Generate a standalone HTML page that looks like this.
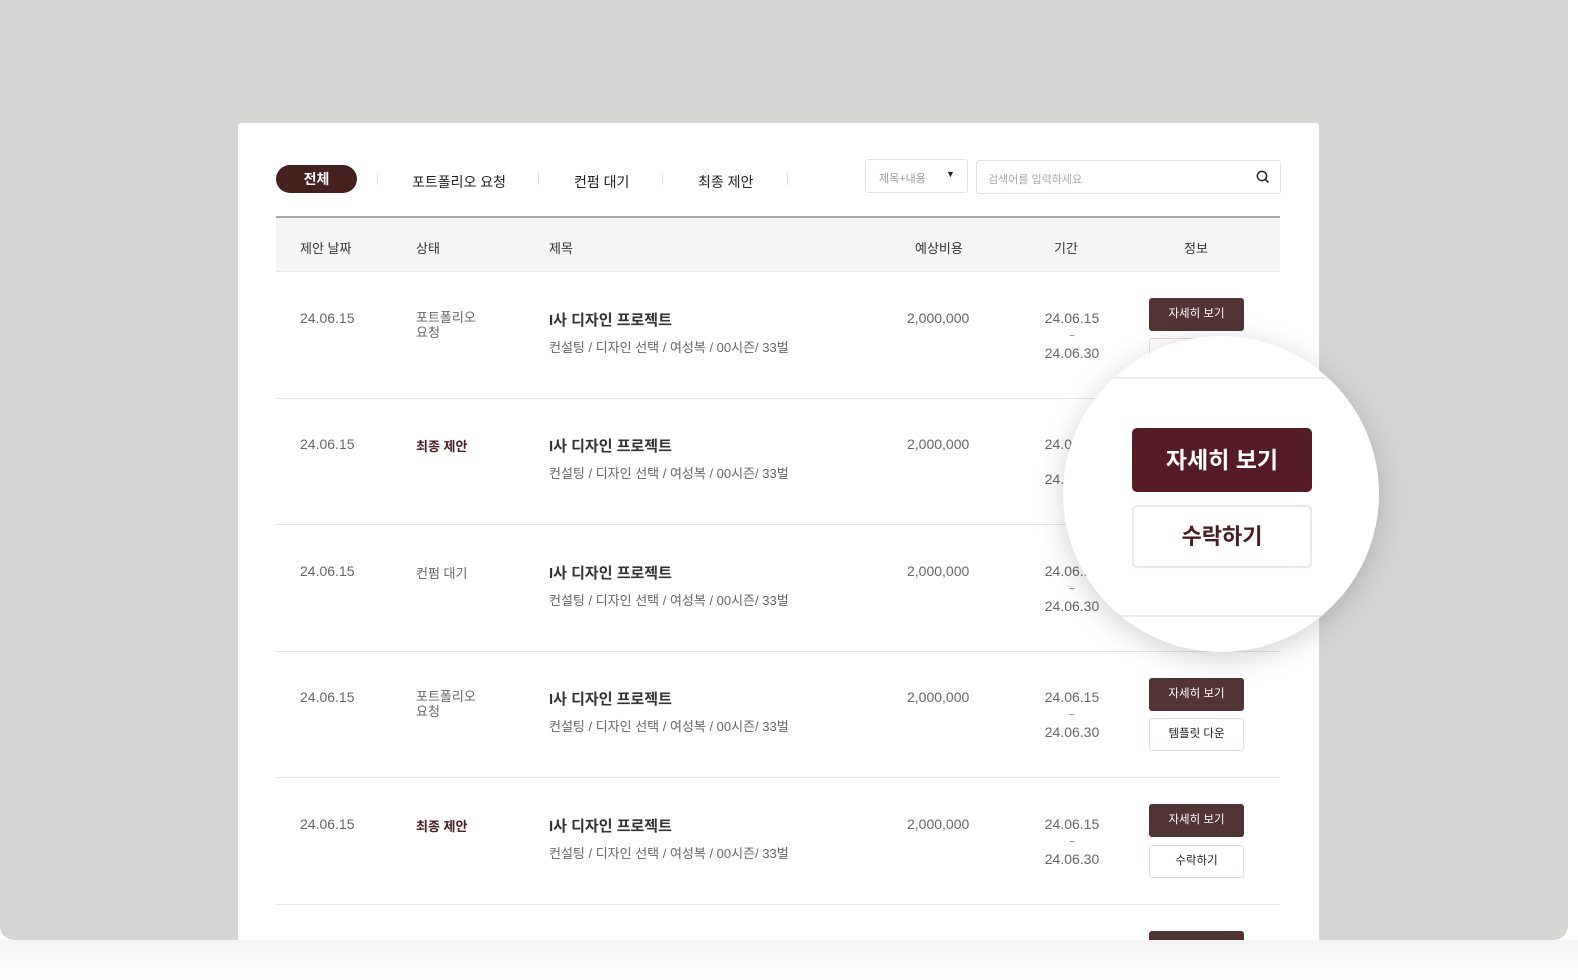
<!DOCTYPE html>
<html><head><meta charset="utf-8"><style>
*{margin:0;padding:0;box-sizing:border-box}
body{width:1578px;height:980px;background:#fff;position:relative;overflow:hidden;font-family:"Liberation Sans","Noto Sans CJK KR",sans-serif;color:#333}
.bg{position:absolute;left:0;top:0;width:1568px;height:940px;background:#d5d5d3;border-radius:0 0 14px 14px;overflow:hidden}
.card{position:absolute;left:238px;top:123px;width:1081px;height:817px;background:#fff;border-radius:3px 3px 0 0}
.a{position:absolute;white-space:nowrap}
.tab{font-size:14px;color:#222;top:172px}
.sep{position:absolute;top:173px;width:1px;height:12px;background:#ddd}
.row .a{font-size:14px}
.g{color:#666}
.btn{position:absolute;left:1149px;width:95px;height:33px;border-radius:3px;font-size:11.5px;text-align:center;line-height:33px}
.d{background:#533435;color:#fff}
.o{background:#fff;border:1px solid #e6d9d7;color:#222;line-height:31px}
.hl{position:absolute;left:276px;width:1004px;height:1px;background:#e4e4e4}
</style></head><body>
<div class="bg">
<div class="card"></div>
</div>
<!-- tabs -->
<div class="a" style="left:276px;top:165px;width:81px;height:28px;border-radius:14px;background:#45201f;color:#fff;font-size:14px;font-weight:bold;text-align:center;line-height:28px">전체</div>
<div class="sep" style="left:377px"></div>
<div class="a tab" style="left:412px">포트폴리오 요청</div>
<div class="sep" style="left:538px"></div>
<div class="a tab" style="left:574px">컨펌 대기</div>
<div class="sep" style="left:662px"></div>
<div class="a tab" style="left:698px">최종 제안</div>
<div class="sep" style="left:787px"></div>
<div class="a" style="left:865px;top:159px;width:103px;height:34px;border:1px solid #e2e2e2;border-radius:3px;font-size:11px;color:#999;padding:10px 0 0 13px">제목+내용<span style="position:absolute;left:80px;top:9px;color:#222;font-size:9px">▼</span></div>
<div class="a" style="left:976px;top:160px;width:305px;height:34px;border:1px solid #e2e2e2;border-radius:3px;font-size:11px;color:#aaa;padding:10px 0 0 11px">검색어를 입력하세요
<svg style="position:absolute;right:10px;top:9px" width="14" height="14" viewBox="0 0 14 14"><circle cx="6" cy="6" r="4.6" fill="none" stroke="#222" stroke-width="1.5"/><path d="M9.4 9.4L12.5 12.5" stroke="#222" stroke-width="1.6"/></svg></div>
<!-- header -->
<div class="a" style="left:276px;top:216px;width:1004px;height:56px;background:#f5f5f5;border-top:2px solid #a8a8a8;border-bottom:1px solid #e6e6e6"></div>
<div class="a" style="left:300px;top:238px;font-size:13px">제안 날짜</div>
<div class="a" style="left:416px;top:238px;font-size:13px">상태</div>
<div class="a" style="left:549px;top:238px;font-size:13px">제목</div>
<div class="a" style="left:915px;top:238px;font-size:13px">예상비용</div>
<div class="a" style="left:1054px;top:238px;font-size:13px">기간</div>
<div class="a" style="left:1184px;top:238px;font-size:13px">정보</div>
<div class="hl" style="top:398px"></div><div class="hl" style="top:524px"></div><div class="hl" style="top:651px"></div><div class="hl" style="top:777px"></div><div class="hl" style="top:904px"></div>

<div class="row">
<!-- row1 y=272 -->
<div class="a g" style="left:300px;top:310px">24.06.15</div>
<div class="a g" style="left:416px;top:310px;font-size:13px;line-height:15px">포트폴리오<br>요청</div>
<div class="a" style="left:549px;top:309px;font-size:15px;font-weight:bold;color:#333">I사 디자인 프로젝트</div>
<div class="a g" style="left:549px;top:337px;font-size:13px">컨설팅 / 디자인 선택 / 여성복 / 00시즌/ 33벌</div>
<div class="a g" style="left:907px;top:310px">2,000,000</div>
<div class="a g" style="left:1043px;top:310px;text-align:center;width:58px;line-height:16px">24.06.15<br><span style="font-size:10px">~</span><br>24.06.30</div>
<div class="btn d" style="top:298px">자세히 보기</div>
<div class="btn o" style="top:338px"></div>
<!-- row2 y=398 -->
<div class="a g" style="left:300px;top:436px">24.06.15</div>
<div class="a" style="left:416px;top:436px;font-size:13px;font-weight:bold;color:#4a1e20">최종 제안</div>
<div class="a" style="left:549px;top:435px;font-size:15px;font-weight:bold">I사 디자인 프로젝트</div>
<div class="a g" style="left:549px;top:463px;font-size:13px">컨설팅 / 디자인 선택 / 여성복 / 00시즌/ 33벌</div>
<div class="a g" style="left:907px;top:436px">2,000,000</div>
<div class="a g" style="left:1043px;top:436px;text-align:center;width:58px;line-height:16px">24.06.15<br><span style="font-size:10px">~</span><br>24.06.30</div>
<!-- row3 y=524 -->
<div class="a g" style="left:300px;top:563px">24.06.15</div>
<div class="a g" style="left:416px;top:563px;font-size:13px">컨펌 대기</div>
<div class="a" style="left:549px;top:562px;font-size:15px;font-weight:bold">I사 디자인 프로젝트</div>
<div class="a g" style="left:549px;top:590px;font-size:13px">컨설팅 / 디자인 선택 / 여성복 / 00시즌/ 33벌</div>
<div class="a g" style="left:907px;top:563px">2,000,000</div>
<div class="a g" style="left:1043px;top:563px;text-align:center;width:58px;line-height:16px">24.06.15<br><span style="font-size:10px">~</span><br>24.06.30</div>
<!-- row4 y=651 -->
<div class="a g" style="left:300px;top:689px">24.06.15</div>
<div class="a g" style="left:416px;top:689px;font-size:13px;line-height:15px">포트폴리오<br>요청</div>
<div class="a" style="left:549px;top:688px;font-size:15px;font-weight:bold">I사 디자인 프로젝트</div>
<div class="a g" style="left:549px;top:716px;font-size:13px">컨설팅 / 디자인 선택 / 여성복 / 00시즌/ 33벌</div>
<div class="a g" style="left:907px;top:689px">2,000,000</div>
<div class="a g" style="left:1043px;top:689px;text-align:center;width:58px;line-height:16px">24.06.15<br><span style="font-size:10px">~</span><br>24.06.30</div>
<div class="btn d" style="top:678px">자세히 보기</div>
<div class="btn o" style="top:718px">템플릿 다운</div>
<!-- row5 y=777 -->
<div class="a g" style="left:300px;top:816px">24.06.15</div>
<div class="a" style="left:416px;top:816px;font-size:13px;font-weight:bold;color:#4a1e20">최종 제안</div>
<div class="a" style="left:549px;top:815px;font-size:15px;font-weight:bold">I사 디자인 프로젝트</div>
<div class="a g" style="left:549px;top:843px;font-size:13px">컨설팅 / 디자인 선택 / 여성복 / 00시즌/ 33벌</div>
<div class="a g" style="left:907px;top:816px">2,000,000</div>
<div class="a g" style="left:1043px;top:816px;text-align:center;width:58px;line-height:16px">24.06.15<br><span style="font-size:10px">~</span><br>24.06.30</div>
<div class="btn d" style="top:804px">자세히 보기</div>
<div class="btn o" style="top:845px">수락하기</div>
<div class="a" style="left:1149px;top:931px;width:95px;height:9px;background:#533435;border-radius:3px 3px 0 0"></div>
</div>
<div class="a" style="left:0;top:940px;width:1578px;height:40px;background:linear-gradient(#f4f4f4,#fff)"></div>
<!-- magnifier -->
<div class="a" style="left:1063px;top:336px;width:316px;height:316px;border-radius:50%;background:#fff;box-shadow:0 6px 30px rgba(0,0,0,0.18);overflow:hidden">
<div class="a" style="left:0;top:41px;width:316px;height:2px;background:#ececec"></div>
<div class="a" style="left:0;top:279px;width:316px;height:2px;background:#ececec"></div>
<div class="a" style="left:69px;top:92px;width:180px;height:64px;background:#561c25;border-radius:5px;color:#fff;font-size:23px;font-weight:bold;text-align:center;line-height:64px">자세히 보기</div>
<div class="a" style="left:69px;top:169px;width:180px;height:63px;background:#fff;border:2px solid #efe4e2;border-radius:5px;color:#4a1e20;font-size:22px;font-weight:bold;text-align:center;line-height:59px">수락하기</div>
</div>
</body></html>
